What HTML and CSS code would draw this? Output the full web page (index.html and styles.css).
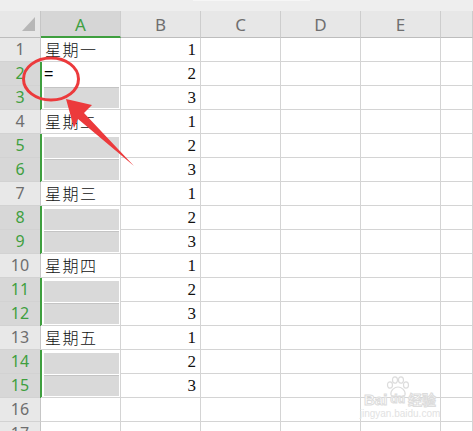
FILE: index.html
```html
<!DOCTYPE html>
<html>
<head>
<meta charset="utf-8">
<link rel="stylesheet" href="styles.css">
</head>
<body>
<div class="topbar"><div class="topbar-hl"></div></div>
<div class="sheet">
  <div class="ch corner"><div class="tri"></div></div>
  <div class="ch sel">A</div>
  <div class="ch">B</div>
  <div class="ch">C</div>
  <div class="ch">D</div>
  <div class="ch">E</div>
  <div class="ch"></div>

  <div class="rh">1</div><div class="c t">星期一</div><div class="c n">1</div><div class="c"></div><div class="c"></div><div class="c"></div><div class="c"></div>
  <div class="rh sel">2</div>
  <div class="c blk"><div class="sub active">=</div><div class="sub"></div></div>
  <div class="c n">2</div><div class="c"></div><div class="c"></div><div class="c"></div><div class="c"></div>
  <div class="rh sel">3</div><div class="c n">3</div><div class="c"></div><div class="c"></div><div class="c"></div><div class="c"></div>

  <div class="rh">4</div><div class="c t">星期二</div><div class="c n">1</div><div class="c"></div><div class="c"></div><div class="c"></div><div class="c"></div>
  <div class="rh sel">5</div>
  <div class="c blk"><div class="sub"></div><div class="sub"></div></div>
  <div class="c n">2</div><div class="c"></div><div class="c"></div><div class="c"></div><div class="c"></div>
  <div class="rh sel">6</div><div class="c n">3</div><div class="c"></div><div class="c"></div><div class="c"></div><div class="c"></div>

  <div class="rh">7</div><div class="c t">星期三</div><div class="c n">1</div><div class="c"></div><div class="c"></div><div class="c"></div><div class="c"></div>
  <div class="rh sel">8</div>
  <div class="c blk"><div class="sub"></div><div class="sub"></div></div>
  <div class="c n">2</div><div class="c"></div><div class="c"></div><div class="c"></div><div class="c"></div>
  <div class="rh sel">9</div><div class="c n">3</div><div class="c"></div><div class="c"></div><div class="c"></div><div class="c"></div>

  <div class="rh">10</div><div class="c t">星期四</div><div class="c n">1</div><div class="c"></div><div class="c"></div><div class="c"></div><div class="c"></div>
  <div class="rh sel">11</div>
  <div class="c blk"><div class="sub"></div><div class="sub"></div></div>
  <div class="c n">2</div><div class="c"></div><div class="c"></div><div class="c"></div><div class="c"></div>
  <div class="rh sel">12</div><div class="c n">3</div><div class="c"></div><div class="c"></div><div class="c"></div><div class="c"></div>

  <div class="rh">13</div><div class="c t">星期五</div><div class="c n">1</div><div class="c"></div><div class="c"></div><div class="c"></div><div class="c"></div>
  <div class="rh sel">14</div>
  <div class="c blk"><div class="sub"></div><div class="sub"></div></div>
  <div class="c n">2</div><div class="c"></div><div class="c"></div><div class="c"></div><div class="c"></div>
  <div class="rh sel">15</div><div class="c n">3</div><div class="c"></div><div class="c"></div><div class="c"></div><div class="c"></div>

  <div class="rh">16</div><div class="c"></div><div class="c"></div><div class="c"></div><div class="c"></div><div class="c"></div><div class="c"></div>
  <div class="rh">17</div><div class="c"></div><div class="c"></div><div class="c"></div><div class="c"></div><div class="c"></div><div class="c"></div>
</div>

<svg class="annot" width="473" height="431" viewBox="0 0 473 431">
  <ellipse cx="51" cy="79" rx="27.5" ry="21" fill="none" stroke="#ec3a3c" stroke-width="3"/>
  <polygon points="66,99 92,105 84,113 134,166 78,119 74,128" fill="#ec3a3c"/>
</svg>

<div class="wm">
  <svg class="paw" width="30" height="22" viewBox="0 0 30 22">
    <g fill="none" stroke="#dcdcdc" stroke-width="1.2">
      <ellipse cx="8" cy="9" rx="2.5" ry="3.2"/>
      <ellipse cx="13" cy="4" rx="2.5" ry="3.2"/>
      <ellipse cx="19" cy="4" rx="2.5" ry="3.2"/>
      <ellipse cx="24" cy="9" rx="2.5" ry="3.2"/>
      <path d="M9 19 C8 14 13 11 16 11 C19 11 24 14 23 19 C22 21 10 21 9 19 Z"/>
    </g>
  </svg>
  <div class="wm-line"><span class="wm-bai">Bai</span><span class="wm-du">du</span><span class="wm-jy">经验</span></div>
  <div class="wm-url">jingyan.baidu.com</div>
</div>
</body>
</html>
```

FILE: styles.css
```css
html, body {
  margin: 0;
  padding: 0;
}
body {
  width: 473px;
  height: 431px;
  overflow: hidden;
  background: #ffffff;
  font-family: "Noto Sans", "Noto Sans CJK SC", sans-serif;
  position: relative;
}
.topbar {
  height: 11px;
  background: #eeeeee;
  position: relative;
}
.topbar-hl {
  position: absolute;
  left: 193px;
  top: 0;
  width: 117px;
  height: 1px;
  background: #f6f6f6;
}
.sheet {
  display: grid;
  grid-template-columns: 41px repeat(5, 80px) 32px;
  grid-template-rows: 27px;
  grid-auto-rows: 24px;
  width: 473px;
  height: 420px;
  overflow: hidden;
}
.ch {
  box-sizing: border-box;
  background: #e7e7e7;
  border-right: 1px solid #cdcdcd;
  border-bottom: 1px solid #bdbdbd;
  display: flex;
  align-items: center;
  justify-content: center;
  color: #6f6f6f;
  font-size: 17px;
  font-family: "Noto Sans", sans-serif;
}
.ch.sel {
  background: #d6d6d6;
  color: #3f9f3f;
  border-bottom: 2px solid #3f9f3f;
  padding-top: 1px;
}
.ch.corner {
  justify-content: flex-end;
  align-items: flex-end;
  padding: 0 5px 6px 0;
  border-right-color: #c6c6c6;
}
.tri {
  width: 13px;
  height: 14px;
  background: #b7b7b7;
  clip-path: polygon(100% 0, 100% 100%, 0 100%);
}
.rh {
  box-sizing: border-box;
  background: #e8e8e8;
  border-right: 1px solid #c6c6c6;
  border-bottom: 1px solid #d2d2d2;
  text-align: center;
  font-size: 16px;
  line-height: 23px;
  color: #6e6e6e;
  font-family: "Noto Sans", sans-serif;
}
.rh.sel {
  background: #d7d7d7;
  color: #3f9f3f;
}
.c {
  box-sizing: border-box;
  border-right: 1px solid #d4d4d4;
  border-bottom: 1px solid #d4d4d4;
}
.t {
  font-family: "Noto Sans CJK SC", sans-serif;
  font-size: 16px;
  font-weight: 300;
  line-height: 23px;
  padding-left: 4px;
  color: #111;
  letter-spacing: 1.5px;
}
.n {
  font-family: "Liberation Serif", serif;
  font-size: 17px;
  line-height: 24px;
  text-align: right;
  padding-right: 4px;
  color: #111;
}
.blk {
  grid-row: span 2;
  position: relative;
  z-index: 1;
  display: flex;
  flex-direction: column;
  padding: 3px 1px 1px 3px;
  background: #ffffff;
  box-shadow: -1px 0 0 #3f9f3f, inset 1px 0 0 #3f9f3f;
}
.sub {
  height: 21px;
  background: #d9d9d9;
}
.sub + .sub {
  margin-top: 1px;
  border-top: 1px solid #c4c4c4;
  height: 21px;
}
.sub.active {
  background: #ffffff;
  font-family: "Liberation Sans", sans-serif;
  font-size: 16px;
  line-height: 17px;
  color: #000;
}
.annot {
  position: absolute;
  left: 0;
  top: 0;
  z-index: 2;
  pointer-events: none;
}
.wm {
  position: absolute;
  left: 350px;
  top: 376px;
  width: 100px;
  color: #dadada;
  text-align: center;
  z-index: 2;
}
.paw {
  position: absolute;
  left: 32px;
  top: 0;
}
.wm-line {
  margin-top: 15px;
  height: 16px;
  display: flex;
  justify-content: center;
  align-items: center;
  font-family: "Liberation Sans", sans-serif;
  font-weight: bold;
  font-size: 15px;
  color: #ffffff;
  -webkit-text-stroke: 1px #dcdcdc;
}
.wm-du {
  font-size: 12px;
  margin: 0 3px;
}
.wm-jy {
  font-family: "Noto Sans CJK SC", sans-serif;
  font-size: 14px;
}
.wm-url {
  font-family: "Liberation Sans", sans-serif;
  font-size: 10px;
  line-height: 13px;
  color: #e2e2e2;
}
```
